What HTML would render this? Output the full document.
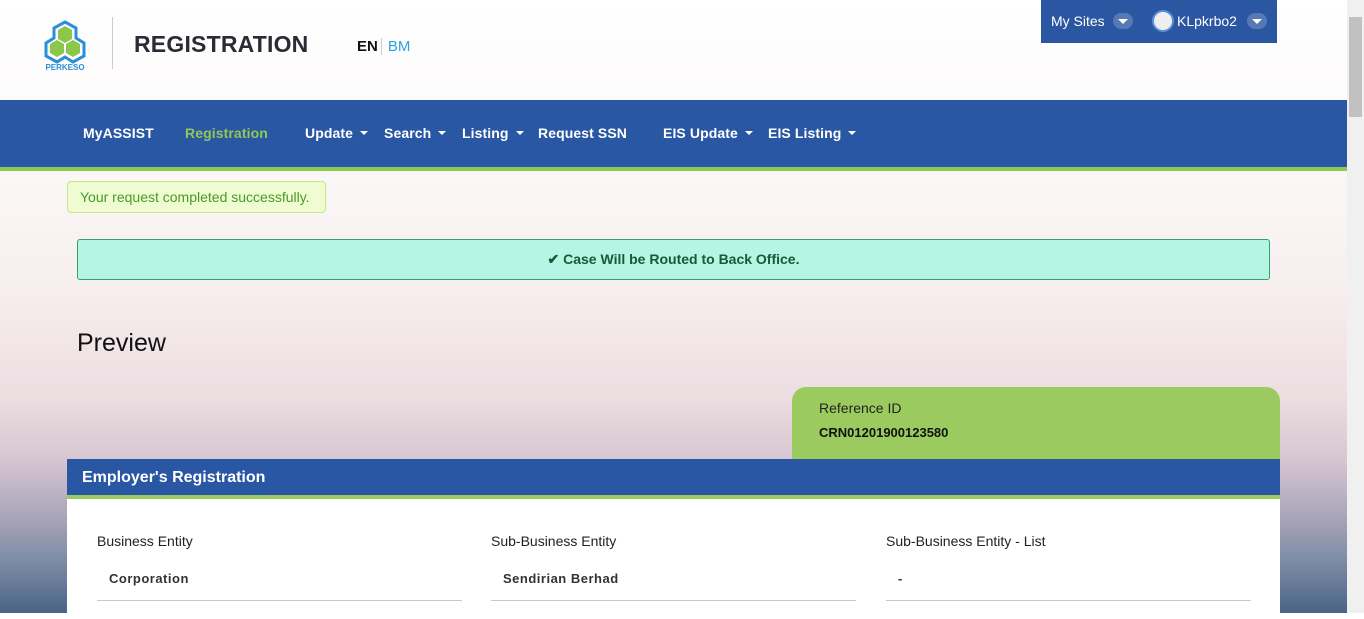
<!DOCTYPE html>
<html><head><style>
*{margin:0;padding:0;box-sizing:border-box}
body{width:1364px;height:613px;overflow:hidden;font-family:"Liberation Sans",Arial,sans-serif;position:relative;
background:linear-gradient(180deg,#fff 0px,#fcf9f9 150px,#f7eeee 290px,#ecdde1 400px,#d6c6d1 460px,#aaa6ba 515px,#7e8ca6 560px,#4a6486 613px);}
.sb{position:absolute;right:0;top:0;width:17px;height:613px;background:#f0f0f0}
.sb .th{position:absolute;left:2px;top:17px;width:13px;height:100px;background:#c1c1c1}
.logo{position:absolute;left:44px;top:20px}
.vl{position:absolute;left:112px;top:17px;width:1px;height:52px;background:#ccc}
h1{position:absolute;left:134px;top:31px;font-size:23px;color:#2b2b35;font-weight:bold;letter-spacing:0.2px}
.lang{position:absolute;left:357px;top:38px;font-size:15px}
.lang b{color:#111}.lang span{color:#2aa3e0;border-left:1px solid #ccc;padding-left:6px;margin-left:3px}
.top{position:absolute;left:1041px;top:0;width:236px;height:43px;background:#2a56a2;color:#fff;font-size:14px}
.dd{display:inline-block;width:20px;height:16px;border-radius:8px;background:#5679b6;position:absolute;top:13px}
.dd:after{content:"";position:absolute;left:5px;top:6px;border:5px solid transparent;border-top:5px solid #fff;border-bottom:0}
.nav{position:absolute;left:0;top:100px;width:1347px;height:71px;background:#2a57a4;border-bottom:4px solid #8ec956}
.nav span{position:absolute;top:25px;color:#fff;font-weight:bold;font-size:14px;letter-spacing:0.1px}
.car:after{content:"";display:inline-block;margin-left:7px;vertical-align:3px;border:4px solid transparent;border-top:4px solid #fff;border-bottom:0}
.ok{position:absolute;left:67px;top:181px;width:259px;height:32px;background:#effbd0;border:1px solid #c6e58a;border-radius:4px;color:#4a9a2a;font-size:14px;padding:7px 12px}
.case{position:absolute;left:77px;top:239px;width:1193px;height:41px;background:#b4f5e3;border:1px solid #3a9e6a;border-radius:3px;color:#135c34;font-weight:bold;font-size:14px;text-align:center;padding-top:11px}
.prev{position:absolute;left:77px;top:329px;font-size:25px;color:#111}
.ref{position:absolute;left:792px;top:387px;width:488px;height:72px;background:#9bcb5e;border-radius:14px 14px 0 0;padding:13px 27px;font-size:14px;color:#222}
.ref b{display:block;margin-top:9px;font-size:13px;color:#111}
.hdr{position:absolute;left:67px;top:459px;width:1213px;height:40px;background:#2a57a4;border-bottom:4px solid #9bcb5e;color:#fff;font-weight:bold;font-size:16px;padding:10px 15px}
.card{position:absolute;left:67px;top:499px;width:1213px;height:120px;background:#fff}
.f{position:absolute;top:34px;width:365px;font-size:14px;color:#222}
.f b{display:block;margin-top:22px;padding-left:12px;font-size:13px;color:#333;letter-spacing:0.5px;padding-bottom:14px;border-bottom:1px solid #c8c8c8}
</style></head><body>
<svg class="logo" width="42" height="52" viewBox="0 0 42 52">
<g fill="none" stroke="#2a8fd6" stroke-width="3"><path d="M21 2 L32 8 L32 18 L40 23 L40 36 L29 42 L21 37 L13 42 L2 36 L2 23 L10 18 L10 8 Z"/></g>
<g fill="#8cc64a"><path d="M14 10 L21 6 L28 10 L28 19 L21 23 L14 19Z"/><path d="M6 24 L13 20 L20 24 L20 33 L13 37 L6 33Z"/><path d="M22 24 L29 20 L36 24 L36 33 L29 37 L22 33Z"/></g>
<text x="21" y="50" font-size="8" font-weight="bold" fill="#2a8fd6" text-anchor="middle" font-family="Liberation Sans">PERKESO</text></svg>
<div class="vl"></div>
<h1>REGISTRATION</h1>
<div class="lang"><b>EN</b><span>BM</span></div>
<div class="top"><span style="position:absolute;left:10px;top:13px">My Sites</span><i class="dd" style="left:72px"></i>
<span style="position:absolute;left:111px;top:10px;width:22px;height:22px;border-radius:50%;background:#eee;border:2px solid #5b8fd8"></span>
<span style="position:absolute;left:136px;top:13px">KLpkrbo2</span><i class="dd" style="left:206px"></i></div>
<div class="nav">
<span style="left:83px">MyASSIST</span><span style="left:185px;color:#8ec956">Registration</span>
<span class="car" style="left:305px">Update</span><span class="car" style="left:384px">Search</span>
<span class="car" style="left:462px">Listing</span><span style="left:538px">Request SSN</span>
<span class="car" style="left:663px">EIS Update</span><span class="car" style="left:768px">EIS Listing</span></div>
<div class="ok">Your request completed successfully.</div>
<div class="case">✔ Case Will be Routed to Back Office.</div>
<div class="prev">Preview</div>
<div class="ref">Reference ID<b>CRN01201900123580</b></div>
<div class="hdr">Employer's Registration</div>
<div class="card">
<div class="f" style="left:30px">Business Entity<b>Corporation</b></div>
<div class="f" style="left:424px">Sub-Business Entity<b>Sendirian Berhad</b></div>
<div class="f" style="left:819px">Sub-Business Entity - List<b>-</b></div>
</div>
<div class="sb"><div class="th"></div></div>
</body></html>
